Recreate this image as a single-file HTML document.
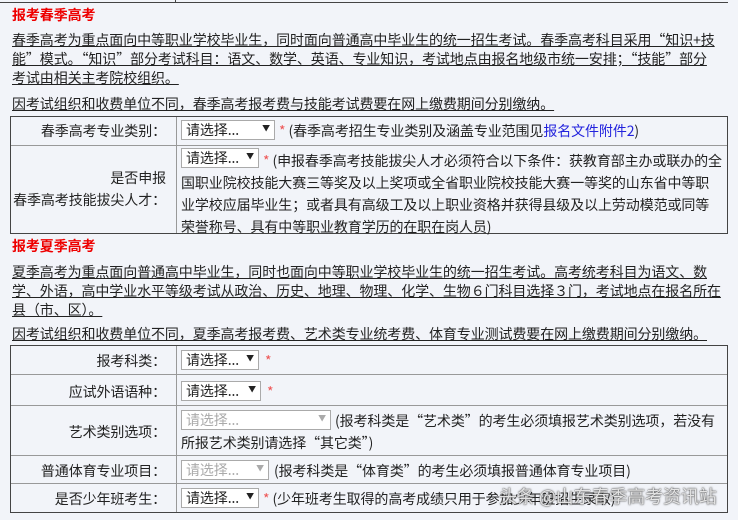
<!DOCTYPE html>
<html><head><meta charset="utf-8"><style>
body{margin:0;width:738px;height:520px;overflow:hidden;background:#f2f4f9;font-family:"Noto Sans CJK SC","Liberation Sans",sans-serif;font-size:14px;letter-spacing:-0.1px;color:#222;position:relative}
.a{position:absolute;white-space:nowrap;line-height:19px}
.t{color:#e00;font-weight:bold;font-size:14px}
.u{text-decoration:underline}
.box{position:absolute;border:1px solid #444;left:10px;width:718px;box-sizing:border-box}
.hl{position:absolute;left:0;right:0;height:1px;background:#999}
.vl{position:absolute;top:0;bottom:0;left:165px;width:1px;background:#999}
.sel{position:absolute;height:20px;border:1px solid #aaa;background:#fff;box-sizing:border-box;font-size:14px;line-height:18px;padding-left:4px;color:#222}
.sel:after{content:"▼";position:absolute;right:4px;top:-1px;font-size:8px}
.dis{color:#aaa}.dis:after{color:#aaa}
.st{color:#e55}
.lab{position:absolute;text-align:right;left:0;width:155px;white-space:nowrap;line-height:19px}
</style></head><body>
<div class="a" style="left:0;top:0;width:728px;height:2px;border-bottom:1px solid #444"></div>
<div class="a" style="left:175px;top:0;width:1px;height:3px;background:#444"></div>
<div class="a t" style="left:12px;top:6px">报考春季高考</div>
<div class="a u" style="left:12px;top:31px">春季高考为重点面向中等职业学校毕业生，同时面向普通高中毕业生的统一招生考试。春季高考科目采用“知识+技<br>能”模式。“知识”部分考试科目：语文、数学、英语、专业知识，考试地点由报名地级市统一安排；“技能”部分<br>考试由相关主考院校组织。</div>
<div class="a u" style="left:12px;top:95px">因考试组织和收费单位不同，春季高考报考费与技能考试费要在网上缴费期间分别缴纳。</div>
<div class="box" style="top:116px;height:118px">
 <div class="vl"></div><div class="hl" style="top:28px"></div>
 <div class="lab" style="top:5px">春季高考专业类别：</div>
 <div class="sel" style="left:170px;top:3px;width:94px">请选择...</div>
 <div class="a" style="left:268px;top:5px"><span class="st">*</span> (春季高考招生专业类别及涵盖专业范围见<span style="color:#22d">报名文件附件2</span>)</div>
 <div class="lab" style="top:52px">是否申报</div>
 <div class="lab" style="top:74px">春季高考技能拔尖人才：</div>
 <div class="sel" style="left:170px;top:31px;width:78px">请选择...</div>
 <div class="a" style="left:252px;top:33px;line-height:22px"><span class="st">*</span> (申报春季高考技能拔尖人才必须符合以下条件：获教育部主办或联办的全</div>
 <div class="a" style="left:170px;top:55px;line-height:22px">国职业院校技能大赛三等奖及以上奖项或全省职业院校技能大赛一等奖的山东省中等职<br>业学校应届毕业生；或者具有高级工及以上职业资格并获得县级及以上劳动模范或同等<br>荣誉称号、具有中等职业教育学历的在职在岗人员)</div>
</div>
<div class="a t" style="left:12px;top:237px">报考夏季高考</div>
<div class="a u" style="left:12px;top:263px">夏季高考为重点面向普通高中毕业生，同时也面向中等职业学校毕业生的统一招生考试。高考统考科目为语文、数<br>学、外语，高中学业水平等级考试从政治、历史、地理、物理、化学、生物６门科目选择３门，考试地点在报名所在<br>县（市、区）。</div>
<div class="a u" style="left:12px;top:325px">因考试组织和收费单位不同，夏季高考报考费、艺术类专业统考费、体育专业测试费要在网上缴费期间分别缴纳。</div>
<div class="box" style="top:345px;height:168px">
 <div class="vl"></div>
 <div class="hl" style="top:28px"></div><div class="hl" style="top:59px"></div><div class="hl" style="top:109px"></div><div class="hl" style="top:137px"></div>
 <div class="lab" style="top:6px">报考科类：</div>
 <div class="sel" style="left:170px;top:4px;width:78px">请选择...</div><div class="a st" style="left:254px;top:6px">*</div>
 <div class="lab" style="top:37px">应试外语语种：</div>
 <div class="sel" style="left:170px;top:35px;width:80px">请选择...</div><div class="a st" style="left:256px;top:37px">*</div>
 <div class="lab" style="top:77px">艺术类别选项：</div>
 <div class="sel dis" style="left:170px;top:64px;width:150px">请选择...</div>
 <div class="a" style="left:324px;top:66px">(报考科类是“艺术类”的考生必须填报艺术类别选项，若没有</div>
 <div class="a" style="left:170px;top:88px">所报艺术类别请选择“其它类”)</div>
 <div class="lab" style="top:116px">普通体育专业项目：</div>
 <div class="sel dis" style="left:170px;top:114px;width:88px">请选择...</div>
 <div class="a" style="left:263px;top:116px">(报考科类是“体育类”的考生必须填报普通体育专业项目)</div>
 <div class="lab" style="top:144px">是否少年班考生：</div>
 <div class="sel" style="left:170px;top:142px;width:78px">请选择...</div>
 <div class="a" style="left:252px;top:144px"><span class="st">*</span> (少年班考生取得的高考成绩只用于参加少年班招生录取)</div>
</div>
<div class="a" style="left:499px;top:484px;font-size:18px;line-height:24px;color:rgba(255,255,255,.85);text-shadow:0 0 1px #333,0 0 2px #555">头条 @山东春季高考资讯站</div>
</body></html>
